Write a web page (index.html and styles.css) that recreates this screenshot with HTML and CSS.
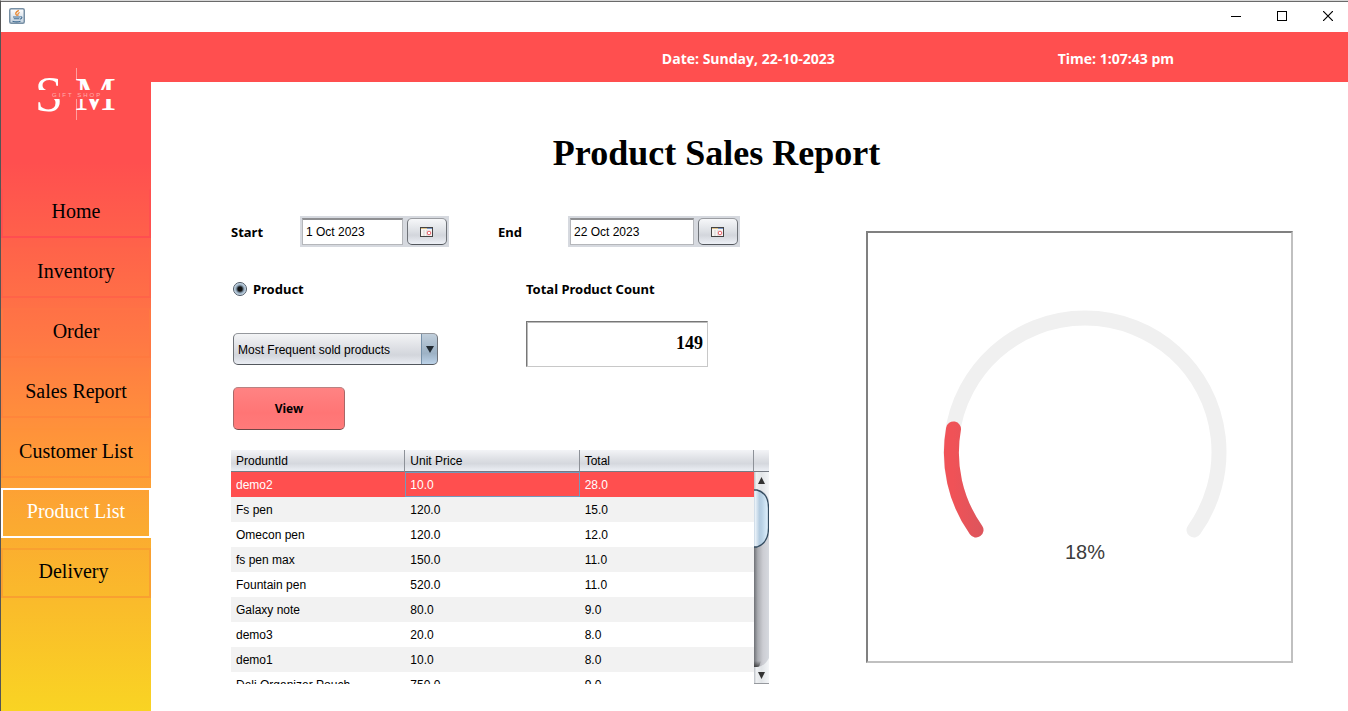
FILE: index.html
```html
<!DOCTYPE html>
<html lang="en">
<head>
<meta charset="utf-8">
<title>Product Sales Report</title>
<link rel="stylesheet" href="styles.css">
</head>
<body>
<div class="window">
  <header class="titlebar">
    <svg class="app-icon" width="16" height="16" viewBox="0 0 16 16" aria-hidden="true">
      <defs><linearGradient id="iconBg" x1="0" y1="0" x2="0" y2="1"><stop offset="0" stop-color="#ffffff"/><stop offset="1" stop-color="#c3d1de"/></linearGradient></defs>
      <rect x=".75" y=".75" width="14.5" height="14.5" rx="1.5" fill="url(#iconBg)" stroke="#7890a5" stroke-width="1.5"/>
      <path d="M9.8 2.4C6.200 4.500 6 5.500 7.800 7.600M10.600 4.500C8.400 5.600 8.600 6.300 9 7.800" fill="none" stroke="#e8842c" stroke-width="1.300"/>
      <path d="M4 9h7M4.800 10.800h5.400M3.500 13.200c2.500.8 6 .8 8 0M11.300 8.800c2.400-.6 2 2-.5 2.300" fill="none" stroke="#426d93" stroke-width="1.100"/>
    </svg>
    <div class="window-buttons">
      <button type="button" aria-label="Minimize"><svg width="10" height="10" viewBox="0 0 10 10"><path d="M0 5.500h10" stroke="#000"/></svg></button>
      <button type="button" aria-label="Maximize"><svg width="10" height="10" viewBox="0 0 10 10"><rect x=".5" y=".5" width="9" height="9" fill="none" stroke="#000"/></svg></button>
      <button type="button" aria-label="Close"><svg width="10" height="10" viewBox="0 0 10 10"><path d="M0 0l10 10M10 0L0 10" stroke="#000" stroke-width="1.200"/></svg></button>
    </div>
  </header>

  <div class="body">
    <aside class="sidebar">
      <svg class="logo" width="82" height="52" viewBox="0 0 82 52" role="img" aria-label="SM Gift Shop">
        <text x="0" y="43" class="logo-letter logo-s">S</text>
        <text x="40" y="42" class="logo-letter">M</text>
        <rect x="0" y="22" width="82" height="9" class="logo-band"/>
        <path d="M41.500 0v12M41.500 31v21" stroke="#fff" stroke-opacity=".45"/>
        <text x="17" y="29" class="logo-caption">GIFT SHOP</text>
      </svg>
      <nav class="nav">
        <button type="button" class="nav-home">Home</button>
        <button type="button" class="nav-inventory">Inventory</button>
        <button type="button" class="nav-order">Order</button>
        <button type="button" class="nav-sales">Sales Report</button>
        <button type="button" class="nav-customer">Customer List</button>
        <button type="button" class="nav-current" aria-current="page">Product List</button>
        <button type="button" class="nav-delivery">Delivery&nbsp;</button>
      </nav>
    </aside>

    <div class="content">
      <div class="status">
        <span>Date: Sunday, 22-10-2023</span>
        <span>Time: 1:07:43 pm</span>
      </div>
      <main class="page">
        <h1>Product Sales Report</h1>
        <div class="columns">
          <form class="report">
            <div class="dates">
              <label for="start" class="label">Start</label>
              <div class="picker picker-start">
                <input id="start" type="text" value="1 Oct 2023">
                <button type="button" aria-label="Choose start date">
                  <svg width="14" height="12" viewBox="0 0 14 12"><rect x=".5" y="1.500" width="12" height="9" fill="#f7f4f2" stroke="#444"/><path d="M1 2.500h6" stroke="#e0c48c"/><path d="M7 2.500h5" stroke="#7795c8"/><path d="M4 4v6M7 4v6" stroke="#d5d5d5"/><circle cx="9" cy="7" r="1.800" fill="#fff" stroke="#e8606a"/></svg>
                </button>
              </div>
              <label for="end" class="label label-end">End</label>
              <div class="picker picker-end">
                <input id="end" type="text" value="22 Oct 2023">
                <button type="button" aria-label="Choose end date">
                  <svg width="14" height="12" viewBox="0 0 14 12"><rect x=".5" y="1.500" width="12" height="9" fill="#f7f4f2" stroke="#444"/><path d="M1 2.500h6" stroke="#e0c48c"/><path d="M7 2.500h5" stroke="#7795c8"/><path d="M4 4v6M7 4v6" stroke="#d5d5d5"/><circle cx="9" cy="7" r="1.800" fill="#fff" stroke="#e8606a"/></svg>
                </button>
              </div>
            </div>
            <div class="filters">
              <div class="filter">
                <label class="label radio"><input type="radio" name="scope" checked>Product</label>
                <div class="combo">
                  <select aria-label="Report type"><option>Most Frequent sold products</option></select>
                  <svg class="combo-arrow" width="8" height="7" viewBox="0 0 8 7" aria-hidden="true"><path d="M0 0h8L4 7z" fill="#222b33"/></svg>
                </div>
                <button type="button" class="view">View</button>
              </div>
              <div class="count">
                <label for="count" class="label">Total Product Count</label>
                <input id="count" type="text" value="149">
              </div>
            </div>
            <div class="scrollpane">
              <div class="viewport">
                <table>
                  <thead><tr><th>ProduntId</th><th>Unit Price</th><th>Total</th></tr></thead>
                  <tbody>
                    <tr class="selected"><td>demo2</td><td class="focused">10.0</td><td>28.0</td></tr>
                    <tr><td>Fs pen</td><td>120.0</td><td>15.0</td></tr>
                    <tr><td>Omecon pen</td><td>120.0</td><td>12.0</td></tr>
                    <tr><td>fs pen max</td><td>150.0</td><td>11.0</td></tr>
                    <tr><td>Fountain pen</td><td>520.0</td><td>11.0</td></tr>
                    <tr><td>Galaxy note</td><td>80.0</td><td>9.0</td></tr>
                    <tr><td>demo3</td><td>20.0</td><td>8.0</td></tr>
                    <tr><td>demo1</td><td>10.0</td><td>8.0</td></tr>
                    <tr><td>Deli Organizer Pouch</td><td>750.0</td><td>9.0</td></tr>
                  </tbody>
                </table>
              </div>
              <div class="scroll-side">
                <div class="corner"></div>
                <svg width="15" height="212" viewBox="0 0 15 212" aria-hidden="true">
                  <defs>
                    <linearGradient id="track"><stop offset="0" stop-color="#6f7176"/><stop offset=".25" stop-color="#a9abb0"/><stop offset=".6" stop-color="#cccdd3"/><stop offset="1" stop-color="#d6d9df"/></linearGradient>
                    <linearGradient id="cap"><stop offset="0" stop-color="#b9bdc3"/><stop offset=".15" stop-color="#eef0f2"/><stop offset=".5" stop-color="#e2e5e8"/><stop offset="1" stop-color="#f4f6f8"/></linearGradient>
                    <linearGradient id="thumb"><stop offset="0" stop-color="#8aa5bf"/><stop offset=".2" stop-color="#e9f1f8"/><stop offset=".45" stop-color="#b4cce0"/><stop offset=".6" stop-color="#b9d2e6"/><stop offset="1" stop-color="#e3f4ff"/></linearGradient>
                    <linearGradient id="shade" x1="0" y1="0" x2="0" y2="1"><stop offset="0" stop-color="#333" stop-opacity="0"/><stop offset="1" stop-color="#333" stop-opacity=".8"/></linearGradient>
                  </defs>
                  <rect width="15" height="212" fill="url(#track)"/>
                  <path d="M0 0h15v28Q11 18 4 18H0z" fill="url(#cap)"/>
                  <path d="M0 189h7L5 195H0z" fill="url(#shade)"/>
                  <path d="M0 195h3q7 0 12-9v26H0z" fill="url(#cap)"/>
                  <path d="M0 211.500h15" stroke="#96999e"/>
                  <path d="M-2 18h5q11.500 3 11.500 18v20q0 15-11.500 19h-5z" fill="url(#thumb)" stroke="#344c60" stroke-width="1.300"/>
                  <path d="M4 12h7L7.500 5zM4 200h7l-3.500 7z" fill="#333"/>
                </svg>
              </div>
            </div>
          </form>

          <section class="gauge" aria-label="Share of sales">
            <svg viewBox="0 0 423 428" role="img" aria-label="18 percent">
              <defs><linearGradient id="arc" gradientUnits="userSpaceOnUse" x1="85" y1="0" x2="112" y2="0"><stop offset="0" stop-color="#f05257"/><stop offset="1" stop-color="#de555c"/></linearGradient></defs>
              <path d="M108 297A134 134 0 1 1 326 297" class="gauge-track"/>
              <path d="M108 297A134 134 0 0 1 85.500 196" class="gauge-value" stroke="url(#arc)"/>
              <text x="217" y="326" class="gauge-text">18%</text>
            </svg>
          </section>
        </div>
      </main>
    </div>
  </div>
</div>
</body>
</html>
```
FILE: styles.css
```css
* { box-sizing: border-box; }

body {
  margin: 0;
  background: #fff;
  color: #000;
  font-family: "Liberation Sans", Arial, sans-serif;
  font-size: 12px;
}

button, input, select {
  margin: 0;
  font: inherit;
  color: inherit;
}

.window {
  display: flex;
  flex-direction: column;
  min-height: 100vh;
  border-top: 1px solid #d8d8d8;
  border-left: 1px solid #555;
}

.titlebar {
  display: flex;
  align-items: center;
  justify-content: space-between;
  height: 31px;
  padding: 0 15px 2px 8px;
  border-top: 1px solid #6a6a6a;
}

.app-icon { display: block; }

.window-buttons {
  display: flex;
  gap: 36px;
}

.window-buttons button {
  padding: 0;
  border: 0;
  background: none;
}

.window-buttons svg { display: block; }

.body {
  display: flex;
  flex: 1;
}

.sidebar {
  width: 150px;
  flex: none;
  padding-top: 36px;
  background: linear-gradient(#ff4f4f 0, #ff4f4f 130px, #ff7844 308px, #ff9838 420px, #fba931 490px, #fabb2b 570px, #f9d423 680px);
}

.logo {
  display: block;
  margin: 0 0 68px 34px;
}

.logo-letter {
  font: 46px "Liberation Serif", "Times New Roman", serif;
  fill: #fff;
}

.logo-s { font-size: 50px; }

.logo-band { fill: #ff4f4f; }

.logo-caption {
  font: 6px "Liberation Sans", Arial, sans-serif;
  letter-spacing: 2px;
  fill: #ffb0b0;
}

.nav {
  display: flex;
  flex-direction: column;
  gap: 10px;
}

.nav button {
  height: 50px;
  padding: 0 0 4px;
  border: 2px solid;
  background: none;
  font: 20px "Liberation Serif", "Times New Roman", serif;
}

.nav .nav-home { border-color: #ff554e #ff504f #ff4d50; }
.nav .nav-inventory { border-color: #ff6449 #ff6648 #ff6348; }
.nav .nav-order { border-color: #ff7345 #ff7842 #ff793f; }
.nav .nav-sales { border-color: #ff8140 #ff843e #ff853b; }
.nav .nav-customer { border-color: #ff9139 #ff9338 #ff9136; }
.nav .nav-current { border-color: #fff; color: #fff; }
.nav .nav-delivery { border-color: #f9a030; }

.content {
  display: flex;
  flex: 1;
  flex-direction: column;
  min-width: 0;
}

.status {
  display: flex;
  align-items: center;
  justify-content: flex-end;
  gap: 223px;
  height: 50px;
  padding: 2px 174px 0 0;
  background: #ff4f4f;
  color: #fff;
  font: bold 14px "Open Sans", "Noto Sans", sans-serif;
}

.page { padding: 50px 55px 27px 80px; }

h1 {
  margin: 0 91px 42px 0;
  font: bold 36px/42px "Liberation Serif", "Times New Roman", serif;
  text-align: center;
}

.columns {
  display: grid;
  grid-template-columns: 538fr 427fr;
  align-items: start;
  gap: 97px;
}

.label { font: bold 13px/20px "Noto Sans", "Open Sans", sans-serif; }

.dates {
  display: flex;
  align-items: center;
}

.dates .label { width: 69px; }
.dates .label-end { width: 70px; margin-left: 49px; }

.picker {
  display: flex;
  gap: 4px;
  height: 31px;
  padding: 2px;
  background: #d6d9df;
}

.picker-start { width: 149px; }
.picker-end { width: 172px; }

.picker input {
  flex: 1;
  min-width: 0;
  padding: 0 3px;
  border: 1px solid #b5b7bb;
  border-top: 2px solid #8e8f92;
  background: #fff;
}

.picker button {
  display: flex;
  align-items: center;
  justify-content: center;
  width: 40px;
  padding: 0;
  border: 1px solid #6e7278;
  border-top-color: #9b9da2;
  border-bottom-color: #53575d;
  border-radius: 5px;
  background: linear-gradient(#f6f7f9, #dcdfe4 50%, #d3d6dc 65%, #edf0f6);
}

.filters {
  display: grid;
  grid-template-columns: 293px 182px;
  padding: 32px 0 20px 2px;
}

.filter, .count {
  display: flex;
  flex-direction: column;
  align-items: flex-start;
}

.radio {
  display: flex;
  align-items: center;
  gap: 6px;
}

.radio input {
  appearance: none;
  width: 14px;
  height: 14px;
  border: 1px solid #4a5663;
  border-radius: 50%;
  background: radial-gradient(circle, #111 0 2px, #8fa5b8 4px, #d5e4f1 6px);
}

.combo {
  position: relative;
  width: 205px;
  margin-top: 34px;
}

.combo select {
  display: block;
  appearance: none;
  width: 100%;
  height: 32px;
  padding: 1px 20px 0 4px;
  border: 1px solid #6e7278;
  border-top-color: #95989d;
  border-bottom-color: #53575d;
  border-radius: 5px;
  background:
    linear-gradient(90deg, #7590a8 1px, transparent 1px) right / 16px 100% no-repeat,
    linear-gradient(#c1cfdc, #a3b7c9 50%, #9db2c5 65%, #bdd3e9) right / 16px 100% no-repeat,
    linear-gradient(#f3f4f6, #dcdee3 50%, #d3d6dc 70%, #eaedf3);
}

.combo-arrow {
  position: absolute;
  top: 13px;
  right: 4px;
  pointer-events: none;
}

.view {
  width: 112px;
  height: 43px;
  margin-top: 22px;
  padding: 0;
  border: 1px solid #a86767;
  border-top-color: #b88282;
  border-bottom-color: #704646;
  border-radius: 5px;
  background: linear-gradient(#ff8383, #ff7575 60%, #ff7a7a);
  font: bold 12px "Noto Sans", "Open Sans", sans-serif;
}

.count input {
  width: 182px;
  height: 46px;
  margin-top: 22px;
  padding: 0 4px 2px;
  border: 1px solid #c8c8c8;
  border-top-color: #777;
  border-left-color: #777;
  background: #fff;
  box-shadow: inset 1px 1px 0 #bbb;
  font: bold 18px "Liberation Serif", "Times New Roman", serif;
  text-align: right;
}

.scrollpane {
  display: flex;
  height: 234px;
}

.viewport {
  flex: 1;
  overflow: hidden;
}

table {
  width: 100%;
  border-collapse: separate;
  border-spacing: 0;
  table-layout: fixed;
}

th, .corner {
  height: 22px;
  border-bottom: 1px solid #757a83;
  background: linear-gradient(#f3f4f7, #dddfe4 45%, #d5d8de 65%, #eceff5);
}

th {
  padding: 0 5px;
  border-right: 1px solid #8d9198;
  font-weight: normal;
  text-align: left;
}

td {
  height: 25px;
  padding: 0 5px;
  white-space: nowrap;
}

tbody tr:nth-child(even) { background: #f2f2f2; }

tbody .selected {
  background: #ff4f4f;
  color: #fff;
}

tbody .focused {
  padding: 0 4px;
  border: 1px solid #7399bd;
}

.scroll-side { width: 15px; }
.scroll-side svg { display: block; }

.gauge {
  margin-top: 15px;
  border: 2px solid #808080;
  border-right-color: #c0c0c0;
  border-bottom-color: #c0c0c0;
}

.gauge svg {
  display: block;
  width: 100%;
}

.gauge-track, .gauge-value {
  fill: none;
  stroke-width: 15px;
  stroke-linecap: round;
}

.gauge-track { stroke: #f0f0f0; }

.gauge-text {
  font: 20px "Liberation Sans", Arial, sans-serif;
  fill: #3c3c3c;
  text-anchor: middle;
}
```
